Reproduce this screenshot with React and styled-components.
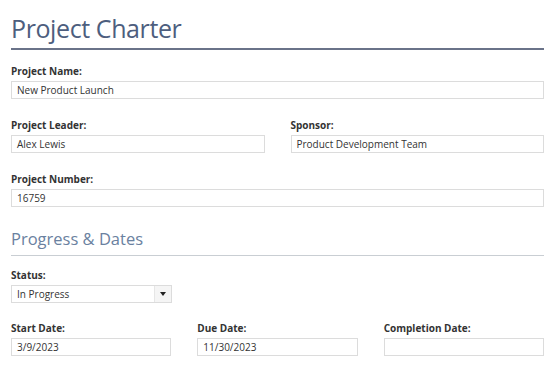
import React from "react";
import styled, { createGlobalStyle } from "styled-components";

const Global = createGlobalStyle`
  html, body { margin: 0; padding: 0; background: #ffffff; }
  body { font-family: "Open Sans", "Noto Sans", "DejaVu Sans", sans-serif; color: #333; }
`;

const Page = styled.div`
  padding: 10px 12px 0 11px;
`;

const Title = styled.h1`
  margin: 0;
  font-size: 25px;
  font-weight: 400;
  line-height: 36px;
  color: #4d5e7e;
  padding-bottom: 2px;
  border-bottom: 2px solid #6a7389;
  letter-spacing: -0.4px;
`;

const Section = styled.h2`
  margin: 20px 0 0;
  font-size: 16.5px;
  font-weight: 400;
  line-height: 24px;
  color: #6a81a0;
  padding-bottom: 4px;
  border-bottom: 1px solid #c9ced3;
`;

const Field = styled.div`
  display: flex;
  flex-direction: column;
  margin-top: ${(p) => p.$top ?? 19}px;
`;

const Label = styled.label`
  font-size: 10px;
  font-weight: 700;
  color: #333;
  line-height: 14px;
  margin-bottom: 3px;
`;

const Input = styled.div`
  box-sizing: border-box;
  height: 18px;
  border: 1px solid #dcdcdc;
  padding: 0 5px;
  font-size: 10px;
  line-height: 16px;
  color: #333;
  background: #fff;
`;

const Row = styled.div`
  display: grid;
  grid-template-columns: repeat(${(p) => p.$cols}, 1fr);
  column-gap: 26px;
`;

const Select = styled.div`
  box-sizing: border-box;
  width: 161px;
  height: 18px;
  border: 1px solid #dcdcdc;
  display: flex;
  font-size: 10px;
  line-height: 16px;
  color: #333;
`;

const SelectText = styled.div`
  flex: 1;
  padding: 0 5px;
`;

const Arrow = styled.div`
  width: 16px;
  border-left: 1px solid #e6e6e6;
  background: #f5f5f5;
  display: flex;
  align-items: center;
  justify-content: center;
  &::after {
    content: "";
    border-left: 3px solid transparent;
    border-right: 3px solid transparent;
    border-top: 4px solid #222;
  }
`;

export default function App() {
  return (
    <>
      <Global />
      <Page>
        <Title>Project Charter</Title>
        <Field $top={14}>
          <Label>Project Name:</Label>
          <Input>New Product Launch</Input>
        </Field>
        <Row $cols={2}>
          <Field>
            <Label>Project Leader:</Label>
            <Input>Alex Lewis</Input>
          </Field>
          <Field>
            <Label>Sponsor:</Label>
            <Input>Product Development Team</Input>
          </Field>
        </Row>
        <Field>
          <Label>Project Number:</Label>
          <Input>16759</Input>
        </Field>
        <Section>Progress &amp; Dates</Section>
        <Field $top={12}>
          <Label>Status:</Label>
          <Select>
            <SelectText>In Progress</SelectText>
            <Arrow />
          </Select>
        </Field>
        <Row $cols={3}>
          <Field $top={18}>
            <Label>Start Date:</Label>
            <Input>3/9/2023</Input>
          </Field>
          <Field $top={18}>
            <Label>Due Date:</Label>
            <Input>11/30/2023</Input>
          </Field>
          <Field $top={18}>
            <Label>Completion Date:</Label>
            <Input />
          </Field>
        </Row>
      </Page>
    </>
  );
}
